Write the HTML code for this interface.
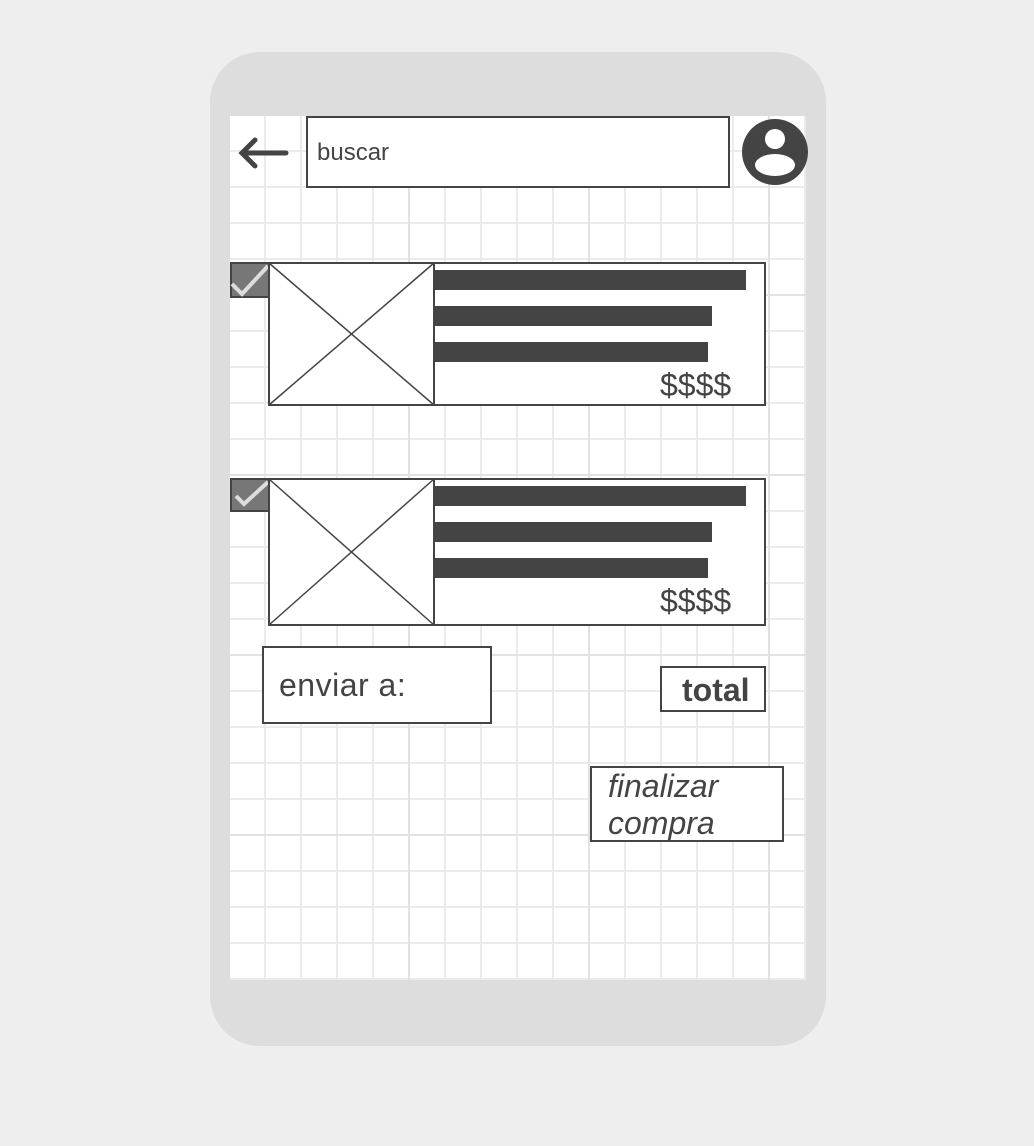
<!DOCTYPE html>
<html><head><style>
body{margin:0;width:1034px;height:1146px;background:#eeeeee;position:relative;overflow:hidden;font-family:"Liberation Sans",sans-serif;color:#444}
.a{position:absolute;box-sizing:border-box}
.phone{left:210px;top:52px;width:616px;height:994px;background:#dddddd;border-radius:50px}
.screen{left:230px;top:116px;width:576px;height:864px;background-color:#fff;
background-image:linear-gradient(to right,#e2e2e2 2px,transparent 2px),linear-gradient(to bottom,#e2e2e2 2px,transparent 2px),linear-gradient(to right,#ebebeb 2px,transparent 2px),linear-gradient(to bottom,#ebebeb 2px,transparent 2px);
background-size:180px 180px,180px 180px,36px 36px,36px 36px;
background-position:178px 178px,178px 178px,34px 34px,34px 34px}
.box{border:2px solid #444;background:#fff}
.bar{background:#444;height:20px}
</style></head><body>
<div class="a phone"></div>
<div class="a screen"></div>
<svg class="a" style="left:236px;top:136px" width="54" height="34"><path d="M50 17H6M19 4L6 17L19 30" stroke="#444" stroke-width="5" fill="none" stroke-linecap="round"/></svg>
<div class="a box" style="left:306px;top:116px;width:424px;height:72px;font-size:24px;padding:21px 0 0 9px">buscar</div>
<svg class="a" style="left:741px;top:118px" width="68" height="68"><circle cx="34" cy="34" r="33" fill="#444"/><circle cx="34" cy="21" r="10" fill="#fff"/><ellipse cx="34" cy="47" rx="20" ry="11" fill="#fff"/></svg>

<div class="a" style="left:230px;top:262px;width:40px;height:36px;background:#777;border:2px solid #444"></div>
<svg class="a" style="left:230px;top:262px" width="40" height="36"><path d="M2 22L12 32L38 4" stroke="#ddd" stroke-width="4" fill="none"/></svg>
<div class="a box" style="left:268px;top:262px;width:498px;height:144px"></div>
<svg class="a" style="left:268px;top:262px" width="167" height="144"><rect x="1" y="1" width="165" height="142" fill="#fff" stroke="#444" stroke-width="2"/><path d="M1 1L166 143M166 1L1 143" stroke="#444" stroke-width="1.5"/></svg>
<div class="a bar" style="left:434px;top:270px;width:312px"></div>
<div class="a bar" style="left:434px;top:306px;width:278px"></div>
<div class="a bar" style="left:434px;top:342px;width:274px"></div>
<div class="a" style="left:660px;top:367px;font-size:32px">$$$$</div>

<div class="a" style="left:230px;top:478px;width:40px;height:34px;background:#777;border:2px solid #444"></div>
<svg class="a" style="left:230px;top:478px" width="40" height="34"><path d="M6 18L14 26L38 4" stroke="#ddd" stroke-width="4" fill="none"/></svg>
<div class="a box" style="left:268px;top:478px;width:498px;height:148px"></div>
<svg class="a" style="left:268px;top:478px" width="167" height="148"><rect x="1" y="1" width="165" height="146" fill="#fff" stroke="#444" stroke-width="2"/><path d="M1 1L166 147M166 1L1 147" stroke="#444" stroke-width="1.5"/></svg>
<div class="a bar" style="left:434px;top:486px;width:312px"></div>
<div class="a bar" style="left:434px;top:522px;width:278px"></div>
<div class="a bar" style="left:434px;top:558px;width:274px"></div>
<div class="a" style="left:660px;top:583px;font-size:32px">$$$$</div>

<div class="a box" style="left:262px;top:646px;width:230px;height:78px;font-size:32px;padding:19px 0 0 15px;letter-spacing:0.5px">enviar a:</div>
<div class="a box" style="left:660px;top:666px;width:106px;height:46px;font-size:32px;font-weight:bold;padding:4px 0 0 20px">total</div>
<div class="a box" style="left:590px;top:766px;width:194px;height:76px;font-size:32px;font-style:italic;line-height:37px;padding:0 0 0 16px">finalizar compra</div>
</body></html>
